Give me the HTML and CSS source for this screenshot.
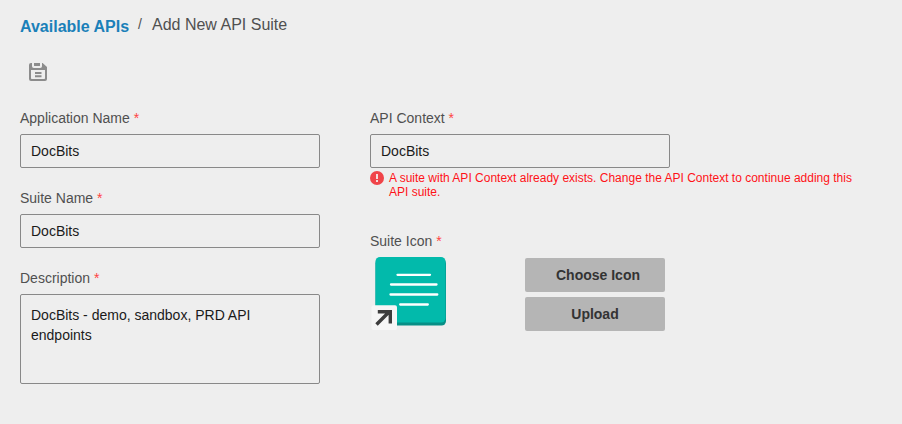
FILE: index.html
```html
<!DOCTYPE html>
<html lang="en">
<head>
<meta charset="utf-8">
<title>Add New API Suite</title>
<link rel="stylesheet" href="styles.css">
</head>
<body>
<main class="page">
  <nav class="breadcrumb">
    <a class="crumb-link" href="#">Available APIs</a>
    <span class="crumb-sep">/</span>
    <span class="crumb-current">Add New API Suite</span>
  </nav>
  <div class="toolbar">
    <button class="save" aria-label="Save">
      <svg width="18" height="18" viewBox="0 0 18 18">
        <path fill="#8c8c8c" fill-rule="evenodd" d="M2 0H3V3.200Q3 5 4.800 5H11.200Q13 5 13 3.200V0H13.600L18 4V16Q18 18 16 18H2Q0 18 0 16V2Q0 0 2 0ZM2 7V15.200Q2 16 2.800 16H15.200Q16 16 16 15.200V7Z"/>
        <path fill="#8c8c8c" d="M5 0H11V2.500Q11 3 10.500 3H5.500Q5 3 5 2.500ZM6 9H12.500V11H6ZM6 12.300H12.500V14.200H6Z"/>
      </svg>
    </button>
  </div>
  <form class="columns">
    <div class="column">
      <div class="field">
        <label class="label">Application Name <span class="required">*</span></label>
        <div class="input">DocBits</div>
      </div>
      <div class="field">
        <label class="label">Suite Name <span class="required">*</span></label>
        <div class="input">DocBits</div>
      </div>
      <div class="field">
        <label class="label">Description <span class="required">*</span></label>
        <div class="input textarea">DocBits - demo, sandbox, PRD API endpoints</div>
      </div>
    </div>
    <div class="column column-wide">
      <div class="field">
        <label class="label">API Context <span class="required">*</span></label>
        <div class="input">DocBits</div>
        <div class="error">
          <svg class="error-icon" width="14" height="14" viewBox="0 0 14 14">
            <circle cx="7" cy="7" r="7" fill="#f04449"/>
            <path fill="#f6dcdc" d="M6 3H8V8H6ZM6 9H8V11H6Z"/>
          </svg>
          <p class="error-text">A suite with API Context already exists. Change the API Context to continue adding this API suite.</p>
        </div>
      </div>
      <div class="field icon-field">
        <label class="label">Suite Icon <span class="required">*</span></label>
        <div class="icon-row">
          <svg class="suite-icon" width="80" height="80" viewBox="0 0 80 80">
            <rect x="5.500" y="3" width="70.500" height="66.500" rx="4.500" fill="#078f86"/>
            <rect x="5.500" y="1" width="70" height="65.500" rx="4.500" fill="#02baab"/>
            <path d="M27.500 18.800H60M21 28.500H66.500M20.500 38.500H67.300M30.200 48.500H57.800" stroke="#fff" stroke-width="2.300" stroke-linecap="round"/>
            <rect x="1.500" y="49.200" width="25.500" height="24.800" rx="2" fill="#f6f6f6"/>
            <path d="M6.500 68.500L19.500 55.500M7.800 55.800H20.300V67.500" fill="none" stroke="#3d3d3d" stroke-width="3.400"/>
          </svg>
          <div class="actions">
            <button class="action action-choose" type="button">Choose Icon</button>
            <button class="action" type="button">Upload</button>
          </div>
        </div>
      </div>
    </div>
  </form>
</main>
</body>
</html>
```
FILE: styles.css
```css
* { box-sizing: border-box; }

body {
  margin: 0;
  height: 424px;
  overflow: hidden;
  background: #eee;
  color: #505050;
  font: 14px/20px "Liberation Sans", Arial, sans-serif;
}

.page { padding: 14px 20px 0; }

.breadcrumb {
  display: flex;
  height: 24px;
  font-size: 16px;
  line-height: 20px;
}

.crumb-link {
  padding-top: 3px;
  color: #1a80b9;
  font-weight: 700;
  text-decoration: none;
}

.crumb-sep { margin-left: 9px; font-size: 14px; }
.crumb-current { margin-left: 10px; padding-top: 1px; }

.toolbar { height: 70px; padding: 25px 9px 0; }

.save {
  display: block;
  padding: 0;
  border: 0;
  background: none;
}

.save svg { display: block; }

.columns { display: flex; gap: 50px; }

.column {
  display: flex;
  flex-direction: column;
  gap: 20px;
  width: 300px;
}

.column-wide { width: 500px; gap: 32px; }

.label { display: block; margin-bottom: 6px; }
.required { color: #ff4343; }

.input {
  width: 300px;
  height: 34px;
  padding: 6px 10px;
  border: 1px solid #888;
  border-radius: 2px;
  color: #1a1a1a;
}

.textarea { height: 90px; padding: 10px; }

.error { display: flex; gap: 5px; margin-top: 3px; }
.error-icon { flex: none; }

.error-text {
  width: 470px;
  margin: 0;
  color: #ff1218;
  font-size: 12px;
  line-height: 14px;
}

.icon-field .label { margin-bottom: 5px; }
.icon-row { display: flex; gap: 75px; }

.actions {
  display: flex;
  flex-direction: column;
  gap: 5px;
  padding-top: 2px;
}

.action {
  width: 140px;
  height: 34px;
  padding: 0;
  border: 0;
  border-radius: 2px;
  background: #b5b5b5;
  color: #333;
  font: 700 14px/20px "Liberation Sans", Arial, sans-serif;
}

.action-choose { padding-left: 6px; }
```
